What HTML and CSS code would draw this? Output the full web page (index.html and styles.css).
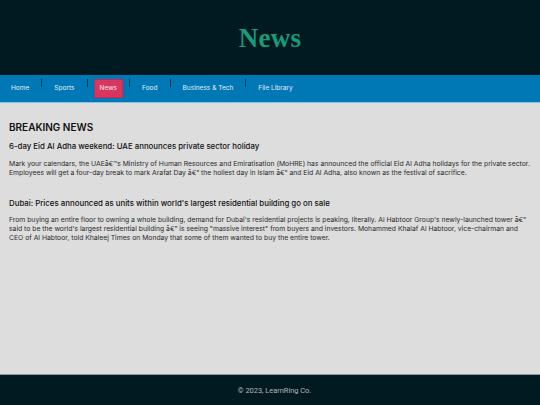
FILE: index.html
```html
<!DOCTYPE html>
<html lang="en">
<head>
<meta charset="utf-8">
<title>News</title>
<link rel="stylesheet" href="styles.css">
</head>
<body>
<header class="site-header">
  <h1 class="site-title">News</h1>
</header>
<nav class="main-nav">
  <a class="nav-item" href="#">Home</a>
  <span class="nav-sep"></span>
  <a class="nav-item" href="#">Sports</a>
  <span class="nav-sep"></span>
  <a class="nav-item active" href="#">News</a>
  <span class="nav-sep"></span>
  <a class="nav-item" href="#">Food</a>
  <span class="nav-sep"></span>
  <a class="nav-item" href="#">Business &amp; Tech</a>
  <span class="nav-sep"></span>
  <a class="nav-item" href="#">File Library</a>
</nav>
<main class="content">
  <h2 class="section-title">BREAKING NEWS</h2>
  <article class="story">
    <h3 class="story-title">6-day Eid Al Adha weekend: UAE announces private sector holiday</h3>
    <p class="story-text">Mark your calendars, the UAEâ€™s Ministry of Human Resources and Emiratisation (MoHRE) has announced the official Eid Al Adha holidays for the private sector. Employees will get a four-day break to mark Arafat Day â€” the holiest day in Islam â€” and Eid Al Adha, also known as the festival of sacrifice.</p>
  </article>
  <article class="story">
    <h3 class="story-title">Dubai: Prices announced as units within world's largest residential building go on sale</h3>
    <p class="story-text">From buying an entire floor to owning a whole building, demand for Dubai's residential projects is peaking, literally. Al Habtoor Group's newly-launched tower â€” said to be the world's largest residential building â€” is seeing "massive interest" from buyers and investors. Mohammed Khalaf Al Habtoor, vice-chairman and CEO of Al Habtoor, told Khaleej Times on Monday that some of them wanted to buy the entire tower.</p>
  </article>
</main>
<footer class="site-footer">
  <p class="footer-text">© 2023, LearnRing Co.</p>
</footer>
</body>
</html>
```

FILE: styles.css
```css
* {
  box-sizing: border-box;
}

html, body {
  margin: 0;
  padding: 0;
}

body {
  min-height: 100vh;
  display: flex;
  flex-direction: column;
  background: #dddddd;
  font-family: Inter, "Liberation Sans", sans-serif;
  color: #1a1a1a;
}

.site-header {
  height: 75px;
  background: #011a21;
  display: flex;
  align-items: center;
  justify-content: center;
}

.site-title {
  margin: 0;
  padding-top: 1px;
  font-family: "Liberation Serif", "DejaVu Serif", serif;
  font-weight: bold;
  font-size: 27px;
  line-height: 30px;
  color: #179b7b;
  letter-spacing: 0.3px;
}

.main-nav {
  height: 28px;
  background: #0078b5;
  border-bottom: 1.5px solid #86c4e3;
  display: flex;
  align-items: center;
  padding-left: 5px;
}

.nav-item {
  display: block;
  height: 19px;
  line-height: 19px;
  padding: 0 6px;
  font-size: 6.55px;
  color: #e3eef6;
  text-decoration: none;
}

.nav-item.active {
  background: #d8365f;
  color: #fbe6ec;
  box-shadow: inset 0 0 0 1px #c42c53;
}

.nav-sep {
  align-self: flex-start;
  margin: 4px 6px 0;
  width: 1px;
  height: 8px;
  background: #0c2e40;
}

.content {
  flex: 1;
  padding: 18px 9px 0;
}

.section-title {
  margin: 0 0 8px;
  font-size: 10px;
  line-height: 12px;
  font-weight: 600;
  color: #111;
}

.story {
  margin-bottom: 21px;
}

.story-title {
  margin: 0 0 7.5px;
  font-size: 7.85px;
  line-height: 10px;
  font-weight: 500;
  color: #111;
}

.story-text {
  margin: 0;
  font-size: 6.8px;
  line-height: 9px;
  color: #2a2a2a;
}

.site-footer {
  height: 31px;
  background: #011a21;
  border-top: 1px solid #8c9598;
  display: flex;
  align-items: center;
  justify-content: center;
  padding-left: 9px;
}

.footer-text {
  margin: 0;
  font-family: Roboto, Inter, sans-serif;
  font-size: 7.4px;
  color: #b4b8ba;
}
```
